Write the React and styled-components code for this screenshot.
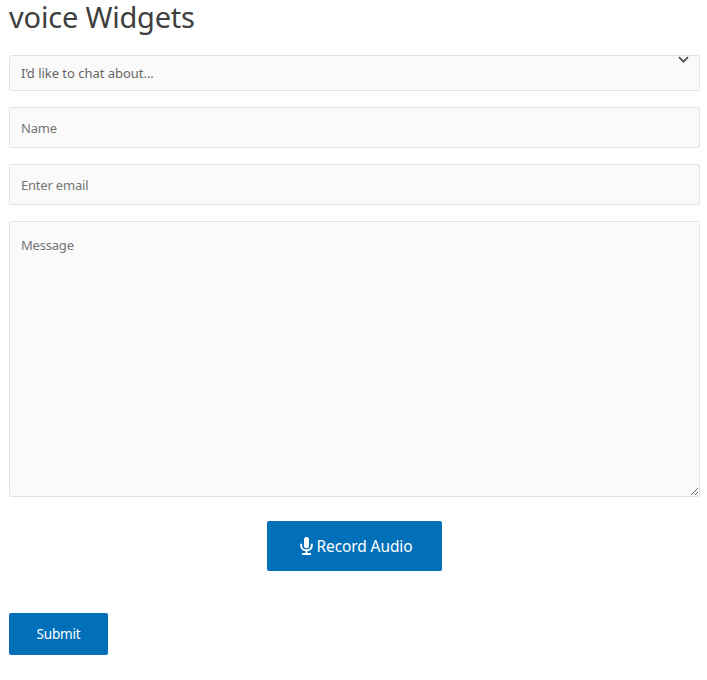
import React from "react";
import styled, { createGlobalStyle, css } from "styled-components";

const GlobalStyle = createGlobalStyle`
  *, *::before, *::after { box-sizing: border-box; }
  body {
    margin: 0;
    background: #fff;
    font-family: "Segoe UI", "Noto Sans", "Open Sans", sans-serif;
  }
`;

const Page = styled.main`
  display: flex;
  flex-direction: column;
  width: 707px;
  height: 680px;
  padding: 0 7px 0 9px;
`;

const Title = styled.h1`
  margin: 0 0 17px;
  height: 38px;
  font-size: 29px;
  font-weight: 400;
  line-height: 34px;
  letter-spacing: -0.2px;
  color: #3f3f3f;
  white-space: nowrap;
`;

const Form = styled.form`
  display: flex;
  flex-direction: column;
  gap: 16px;
`;

const field = css`
  display: block;
  width: 100%;
  margin: 0;
  border: 1px solid #e3e3e3;
  border-radius: 2px;
  background: #fafafa;
  color: #666;
  font-family: inherit;
  font-size: 13px;
  letter-spacing: ${(p) => p.$tracking || "-0.2px"};
  outline: none;

  &::placeholder {
    color: #757575;
    opacity: 1;
  }
`;

const SelectWrap = styled.div`
  position: relative;
  height: 36px;
`;

const Select = styled.select`
  ${field}
  height: 36px;
  padding: 0 30px 0 11px;
  appearance: none;
`;

const Chevron = styled.svg`
  position: absolute;
  top: 1px;
  right: 10px;
  width: 13px;
  height: 8px;
  pointer-events: none;
`;

const Input = styled.input`
  ${field}
  height: 41px;
  padding: 0 11px;
`;

const TextArea = styled.textarea`
  ${field}
  height: 276px;
  padding: 11px;
  line-height: 24px;
  resize: vertical;
`;

const Button = styled.button`
  display: flex;
  align-items: center;
  justify-content: center;
  border: 0;
  border-radius: 2px;
  padding: 0;
  background: #0170b9;
  color: #fff;
  font-family: inherit;
  white-space: nowrap;
`;

const RecordButton = styled(Button)`
  align-self: center;
  gap: 3px;
  width: 175px;
  height: 50px;
  margin-top: 8px;
  padding-left: 4px;
  font-size: 15.5px;
  letter-spacing: -0.1px;
`;

const SubmitButton = styled(Button)`
  align-self: flex-start;
  width: 99px;
  height: 42px;
  margin-top: 26px;
  font-size: 13.5px;
  letter-spacing: -0.2px;
`;

const MicIcon = styled.svg`
  width: 13px;
  height: 18px;
`;

export default function App() {
  return (
    <>
      <GlobalStyle />
      <Page>
        <Title>voice Widgets</Title>
        <Form onSubmit={(e) => e.preventDefault()}>
          <SelectWrap>
            <Select aria-label="Topic" $tracking="-0.03px">
              <option>I’d like to chat about...</option>
            </Select>
            <Chevron viewBox="0 0 13 8" fill="none" aria-hidden="true">
              <path d="M2 1.2 6.5 5.7 11 1.2" stroke="#505050" strokeWidth="1.7" />
            </Chevron>
          </SelectWrap>
          <Input type="text" placeholder="Name" aria-label="Name" />
          <Input type="email" placeholder="Enter email" aria-label="Email" />
          <TextArea placeholder="Message" aria-label="Message" />
          <RecordButton type="button">
            <MicIcon viewBox="0 0 13 18" fill="none" aria-hidden="true">
              <rect x="4" y="0" width="5" height="11.2" rx="2.5" fill="#fff" />
              <path
                d="M1.2 6.8v1.6c0 3 2.3 4.9 5.3 4.9s5.3-1.9 5.3-4.9V6.8M6.5 13.3V17M2 16.9h9"
                stroke="#fff"
                strokeWidth="2"
              />
            </MicIcon>
            <span>Record Audio</span>
          </RecordButton>
          <SubmitButton type="submit">Submit</SubmitButton>
        </Form>
      </Page>
    </>
  );
}
